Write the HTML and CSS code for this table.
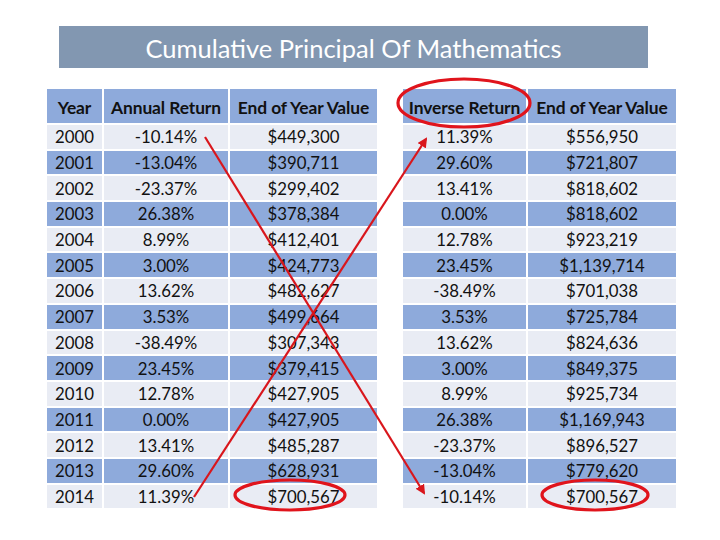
FILE: index.html
```html
<!DOCTYPE html>
<html>
<head>
<meta charset="utf-8">
<link rel="stylesheet" href="styles.css">
</head>
<body>
<div class="slide">
  <div class="title">Cumulative Principal Of Mathematics</div>
  <div class="tables">
    <div class="tbl left">
      <div class="h">Year</div><div class="h">Annual Return</div><div class="h">End of Year Value</div>
      <div class="l">2000</div><div class="l">-10.14%</div><div class="l">$449,300</div>
      <div class="d">2001</div><div class="d">-13.04%</div><div class="d">$390,711</div>
      <div class="l">2002</div><div class="l">-23.37%</div><div class="l">$299,402</div>
      <div class="d">2003</div><div class="d">26.38%</div><div class="d">$378,384</div>
      <div class="l">2004</div><div class="l">8.99%</div><div class="l">$412,401</div>
      <div class="d">2005</div><div class="d">3.00%</div><div class="d">$424,773</div>
      <div class="l">2006</div><div class="l">13.62%</div><div class="l">$482,627</div>
      <div class="d">2007</div><div class="d">3.53%</div><div class="d">$499,664</div>
      <div class="l">2008</div><div class="l">-38.49%</div><div class="l">$307,343</div>
      <div class="d">2009</div><div class="d">23.45%</div><div class="d">$379,415</div>
      <div class="l">2010</div><div class="l">12.78%</div><div class="l">$427,905</div>
      <div class="d">2011</div><div class="d">0.00%</div><div class="d">$427,905</div>
      <div class="l">2012</div><div class="l">13.41%</div><div class="l">$485,287</div>
      <div class="d">2013</div><div class="d">29.60%</div><div class="d">$628,931</div>
      <div class="l">2014</div><div class="l">11.39%</div><div class="l">$700,567</div>
    </div>
    <div class="tbl right">
      <div class="h">Inverse Return</div><div class="h">End of Year Value</div>
      <div class="l">11.39%</div><div class="l">$556,950</div>
      <div class="d">29.60%</div><div class="d">$721,807</div>
      <div class="l">13.41%</div><div class="l">$818,602</div>
      <div class="d">0.00%</div><div class="d">$818,602</div>
      <div class="l">12.78%</div><div class="l">$923,219</div>
      <div class="d">23.45%</div><div class="d">$1,139,714</div>
      <div class="l">-38.49%</div><div class="l">$701,038</div>
      <div class="d">3.53%</div><div class="d">$725,784</div>
      <div class="l">13.62%</div><div class="l">$824,636</div>
      <div class="d">3.00%</div><div class="d">$849,375</div>
      <div class="l">8.99%</div><div class="l">$925,734</div>
      <div class="d">26.38%</div><div class="d">$1,169,943</div>
      <div class="l">-23.37%</div><div class="l">$896,527</div>
      <div class="d">-13.04%</div><div class="d">$779,620</div>
      <div class="l">-10.14%</div><div class="l">$700,567</div>
    </div>
  </div>
  <svg class="marks" width="720" height="540" viewBox="0 0 720 540">
    <defs>
      <marker id="ah" markerWidth="10" markerHeight="10" refX="8" refY="5" orient="auto" markerUnits="userSpaceOnUse">
        <path d="M0,0 L10,5 L0,10 Z" fill="#d9161c"/>
      </marker>
    </defs>
    <g stroke="#d9161c" stroke-width="2.2" fill="none">
      <line x1="205" y1="137" x2="424" y2="493" marker-end="url(#ah)"/>
      <line x1="194" y1="497" x2="426" y2="139" marker-end="url(#ah)"/>
    </g>
    <g stroke="#e0141c" stroke-width="3.2" fill="none">
      <ellipse cx="464" cy="103" rx="66" ry="24"/>
      <ellipse cx="290" cy="495" rx="55" ry="15"/>
      <ellipse cx="595" cy="495" rx="53" ry="15"/>
    </g>
  </svg>
</div>
</body>
</html>
```

FILE: styles.css
```css
* { box-sizing: border-box; }
html, body { margin: 0; padding: 0; background: #fff; }
.slide {
  position: relative;
  width: 720px;
  height: 540px;
  padding-top: 26px;
  font-family: Lato, "Liberation Sans", sans-serif;
  color: #111;
}
.title {
  margin-left: 59px;
  width: 589px;
  height: 42px;
  background: #8297b1;
  color: #fff;
  font-size: 25.5px;
  display: flex;
  align-items: center;
  justify-content: center;
  padding-top: 1px;
}
.tables {
  display: flex;
  gap: 26px;
  margin-top: 21px;
  padding-left: 47px;
}
.tbl {
  display: grid;
  gap: 2px;
  grid-template-rows: 34px repeat(15, 23.7px);
}
.left { grid-template-columns: 55px 124px 147px; }
.right { grid-template-columns: 123px 148px; }
.tbl > div {
  display: flex;
  align-items: center;
  justify-content: center;
  font-size: 16.8px;
  white-space: nowrap;
}
.tbl > .h {
  background: #8eaadb;
  font-weight: 700;
  font-size: 17.4px;
  padding-top: 2px;
  letter-spacing: -0.1px;
}
.tbl > .l { background: #e9ecf4; }
.tbl > .d { background: #8eaadb; }
.marks {
  position: absolute;
  left: 0;
  top: 0;
  pointer-events: none;
}
```
